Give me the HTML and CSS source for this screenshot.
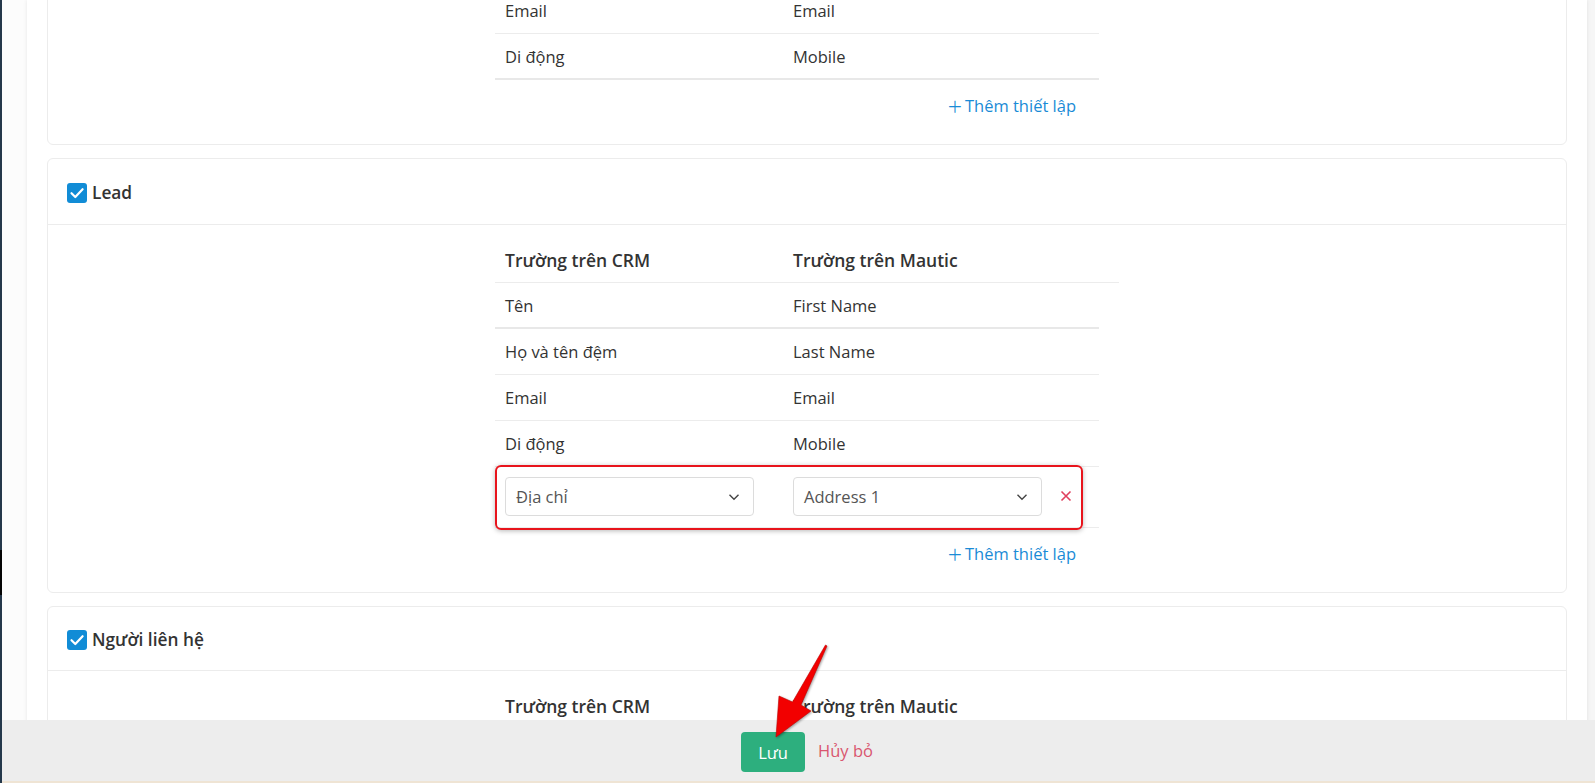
FILE: index.html
```html
<!DOCTYPE html>
<html lang="vi">
<head>
<meta charset="utf-8">
<title>Mautic mapping</title>
<link rel="stylesheet" href="styles.css">
</head>
<body>
<div class="screen">
  <div class="edge"><div class="edge-black"></div></div>
  <div class="side"></div>
  <main class="panel">
    <section class="card card-first">
      <div class="card-body">
        <div class="map">
          <div class="row"><div class="c1">Email</div><div class="c2">Email</div></div>
          <div class="row row-thick"><div class="c1">Di động</div><div class="c2">Mobile</div></div>
        </div>
        <div class="add"><a class="add-link" href="#"><span class="plus">+</span>Thêm thiết lập</a></div>
      </div>
    </section>

    <section class="card">
      <header class="card-head">
        <span class="check"><svg viewBox="0 0 20 20" width="20" height="20"><path d="M4.5 10.2 8.3 14 15.6 6.2" fill="none" stroke="#fff" stroke-width="2.2" stroke-linecap="round" stroke-linejoin="round"/></svg></span>
        <span class="head-title">Lead</span>
      </header>
      <div class="card-body">
        <div class="map">
          <div class="thead"><div class="c1">Trường trên CRM</div><div class="c2">Trường trên Mautic</div></div>
          <div class="row row-thick"><div class="c1">Tên</div><div class="c2">First Name</div></div>
          <div class="row"><div class="c1">Họ và tên đệm</div><div class="c2">Last Name</div></div>
          <div class="row"><div class="c1">Email</div><div class="c2">Email</div></div>
          <div class="row"><div class="c1">Di động</div><div class="c2">Mobile</div></div>
          <div class="row row-edit">
            <div class="c1"><div class="select"><span>Địa chỉ</span><svg class="chev" viewBox="0 0 12 8" width="12" height="8"><path d="M1.5 1.8 6 6.2 10.5 1.8" fill="none" stroke="#444" stroke-width="1.4"/></svg></div></div>
            <div class="c2 c2-sel"><div class="select"><span>Address 1</span><svg class="chev" viewBox="0 0 12 8" width="12" height="8"><path d="M1.5 1.8 6 6.2 10.5 1.8" fill="none" stroke="#444" stroke-width="1.4"/></svg></div></div>
            <div class="c3"><svg viewBox="0 0 12 12" width="12" height="12"><path d="M1.5 1.5 10.5 10.5M10.5 1.5 1.5 10.5" stroke="#e0405e" stroke-width="1.6" fill="none"/></svg></div>
            <div class="highlight"></div>
          </div>
        </div>
        <div class="add"><a class="add-link" href="#"><span class="plus">+</span>Thêm thiết lập</a></div>
      </div>
    </section>

    <section class="card card-last">
      <header class="card-head">
        <span class="check"><svg viewBox="0 0 20 20" width="20" height="20"><path d="M4.5 10.2 8.3 14 15.6 6.2" fill="none" stroke="#fff" stroke-width="2.2" stroke-linecap="round" stroke-linejoin="round"/></svg></span>
        <span class="head-title">Người liên hệ</span>
      </header>
      <div class="card-body">
        <div class="map">
          <div class="thead"><div class="c1">Trường trên CRM</div><div class="c2">Trường trên Mautic</div></div>
          <div class="row row-thick"><div class="c1">Tên</div><div class="c2">First Name</div></div>
        </div>
      </div>
    </section>
  </main>
  <div class="rgutter"></div>
</div>

<div class="bar">
  <button class="btn-save" type="button">Lưu</button>
  <a class="btn-cancel" href="#">Hủy bỏ</a>
</div>

<svg class="arrow" viewBox="0 0 80 105" width="80" height="105">
  <polygon points="67,6 41,65 51,71 16,97 19,56 32.5,62 65.5,5" fill="#f20000" stroke="#c00000" stroke-width="0.6" stroke-linejoin="round"/>
</svg>
</body>
</html>
```

FILE: styles.css
```css
* { box-sizing: border-box; }

html, body {
  margin: 0;
  padding: 0;
  height: 100%;
  overflow: hidden;
}

body {
  font-family: "Open Sans", "Liberation Sans", sans-serif;
  font-size: 16.5px;
  color: #333;
  background: #f8f8f8;
}

.screen {
  display: flex;
  height: 100vh;
  overflow: hidden;
}

.edge {
  width: 2px;
  flex: none;
  background: #25384b;
  padding-top: 550px;
}

.edge-black {
  height: 45px;
  background: #050505;
}

.side {
  width: 25px;
  flex: none;
  background: #fcfcfc;
}

.panel {
  width: 1560px;
  flex: none;
  background: #fff;
  padding: 0 20px;
  box-shadow: 0 0 4px rgba(0, 0, 0, 0.09);
  position: relative;
  z-index: 1;
}

.rgutter {
  flex: 1;
  background: #f6f6f6;
}

.card {
  border: 1px solid #ececec;
  border-radius: 6px;
  background: #fff;
  margin-top: 13px;
}

.card-first {
  margin-top: -25px;
}

.card-last {
  margin-top: 13px;
}

.card-head {
  height: 66px;
  padding: 2px 0 0 19px;
  display: flex;
  align-items: center;
  border-bottom: 1px solid #ececec;
  font-size: 17.3px;
  font-weight: 600;
  color: #333;
}

.card-last .card-head {
  height: 64px;
}

.check {
  width: 20px;
  height: 20px;
  border-radius: 3px;
  background: #118cd6;
  margin-right: 5px;
  display: flex;
}

.card-body {
  padding-top: 12px;
}

.map {
  width: 624px;
  margin: 0 auto;
}

.thead {
  display: flex;
  align-items: center;
  height: 46px;
  border-bottom: 1px solid #ececec;
  font-weight: 600;
  font-size: 17.5px;
  color: #333;
}

.row {
  width: 604px;
  display: flex;
  align-items: center;
  height: 46px;
  border-bottom: 1px solid #ececec;
  color: #333;
  position: relative;
}

.row-thick {
  border-bottom: 2px solid #e8e8e8;
}

.c1 {
  width: 288px;
  padding-left: 10px;
  flex: none;
}

.c2 {
  padding-left: 10px;
}

.row-edit {
  height: 61px;
  padding: 10px 0 11px;
  align-items: flex-start;
}

.c2-sel {
  width: 259px;
  flex: none;
}

.select {
  width: 249px;
  height: 39px;
  border: 1px solid #dcdcdc;
  border-radius: 4px;
  display: flex;
  align-items: center;
  justify-content: space-between;
  padding: 0 13px 0 10px;
  color: #555;
  background: #fff;
}

.chev {
  display: block;
}

.c3 {
  padding: 13px 0 0 18px;
  display: flex;
}

.highlight {
  position: absolute;
  left: 0;
  top: -2px;
  width: 588px;
  height: 65px;
  border: 2px solid #e8141c;
  border-radius: 6px;
  box-shadow: 0 1px 5px rgba(0, 0, 0, 0.28);
  pointer-events: none;
}

.add {
  width: 624px;
  margin: 0 auto;
  display: flex;
  justify-content: flex-end;
  padding: 15px 43px 27px 0;
  line-height: 22px;
}

.add-link {
  color: #1a8bd6;
  text-decoration: none;
  font-size: 16.5px;
  display: flex;
  align-items: center;
}

.plus {
  font-size: 25px;
  font-weight: 300;
  margin-right: 3px;
  line-height: 22px;
}

.bar {
  position: fixed;
  left: 2px;
  right: 0;
  bottom: 0;
  height: 63px;
  background: #ededed;
  border-bottom: 2px solid #efe4d4;
  display: flex;
  justify-content: center;
  align-items: flex-start;
  padding: 12px 8px 0 25px;
  gap: 13px;
  z-index: 5;
}

.btn-save {
  width: 64px;
  height: 40px;
  border: none;
  border-radius: 4px;
  background: #2daf7e;
  color: #fff;
  font-family: "Open Sans", "Liberation Sans", sans-serif;
  font-size: 16.5px;
  padding: 0;
}

.btn-cancel {
  color: #d9566f;
  text-decoration: none;
  font-size: 16.5px;
  line-height: 38px;
}

.arrow {
  position: fixed;
  left: 760px;
  top: 640px;
  z-index: 10;
  filter: drop-shadow(1px 1px 1px rgba(0, 0, 0, 0.35));
}
```
